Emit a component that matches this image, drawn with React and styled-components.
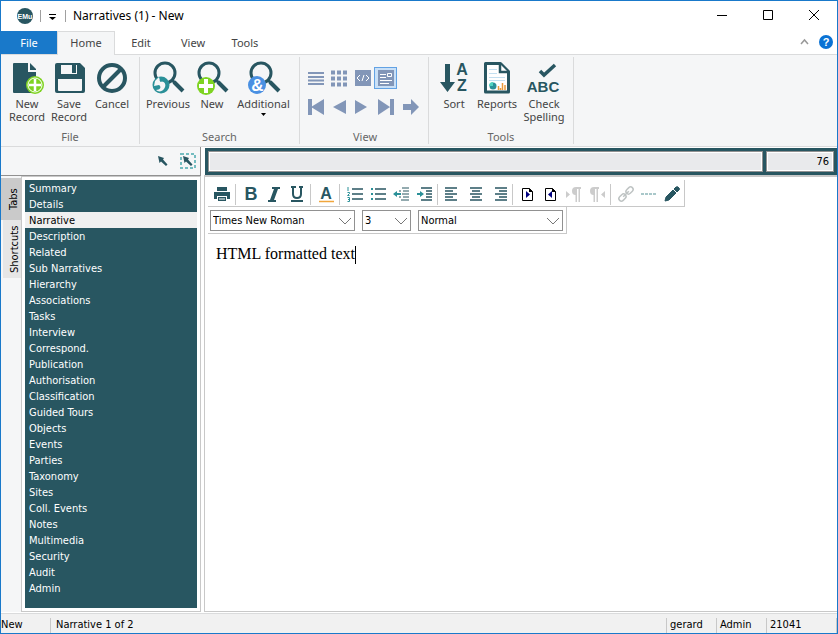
import React, { useState } from 'react';
import styled, { createGlobalStyle, ThemeProvider } from 'styled-components';

const theme = {
  colors: {
    teal: '#285661',
    cyan: '#2a9098',
    green: '#7ed321',
    blue: '#1979ca',
    slate: '#8296b8',
    ribbon: '#f5f6f7',
    line: '#dadbdc',
    border: '#c8c8c8',
    dark: '#919191',
    status: '#f1f1f1',
  },
  fonts: {
    ribbon: '"Noto Sans", "Open Sans", sans-serif',
    form: '"DejaVu Sans Condensed", "Noto Sans", sans-serif',
    editor: '"Liberation Serif", serif',
  },
};

// Style
const GlobalStyle = createGlobalStyle`
  * {
    box-sizing: border-box;
  }

  body {
    margin: 0;
  }

  button, select {
    margin: 0;
    padding: 0;
    border: 0;
    border-radius: 0;
    background: none;
    color: inherit;
    font: inherit;
  }

  svg {
    display: block;
    flex: none;
    overflow: visible;
  }
`;

const Window = styled.div`
  display: flex;
  flex-direction: column;
  min-height: 100vh;
  border: 1px solid ${(props) => props.theme.colors.blue};
  background: #fff;
  color: #000;
  font: 11px/16px ${(props) => props.theme.fonts.form};
`;

const TitleBar = styled.header`
  display: flex;
  align-items: center;
  height: 30px;
  padding-left: 16px;
  font: 12px/16px ${(props) => props.theme.fonts.ribbon};
`;

const TitleLine = styled.span`
  width: 1px;
  height: 12px;
  margin: 0 7px;
  background: #a0a0a0;
`;

const Title = styled.h1`
  flex: 1;
  margin: 0;
  font: inherit;
`;

const WindowButton = styled.button`
  display: grid;
  place-items: center;
  width: 46px;
  height: 30px;
`;

const RibbonTabs = styled.nav`
  display: flex;
  align-items: stretch;
  height: 24px;
  color: #444;
  font: 11px/16px ${(props) => props.theme.fonts.ribbon};
  border-bottom: 1px solid ${(props) => props.theme.colors.line};
`;

const FileTab = styled.button`
  width: 56px;
  background: ${(props) => props.theme.colors.blue};
  color: #fff;
`;

const RibbonTab = styled.button`
  width: ${(props) => (props.$active ? '58px' : '52px')};
  margin-bottom: -1px;
  padding-bottom: 1px;
  border: 1px solid
    ${(props) => (props.$active ? props.theme.colors.line : 'transparent')};
  border-bottom: 0;
  background: ${(props) =>
    props.$active ? props.theme.colors.ribbon : 'transparent'};
`;

const TabTools = styled.div`
  display: flex;
  align-items: center;
  gap: 10px;
  margin-left: auto;
  padding: 0 4px 2px 0;
`;

const Ribbon = styled.div`
  display: flex;
  height: 92px;
  padding: 2px 0;
  background: ${(props) => props.theme.colors.ribbon};
  border-bottom: 1px solid ${(props) => props.theme.colors.line};
  color: #444;
  font: 11px/13px ${(props) => props.theme.fonts.ribbon};
`;

const Group = styled.section`
  display: flex;
  flex-direction: column;
  justify-content: space-between;
  padding: ${(props) => (props.$tight ? '5px 3px 1px 5px' : '5px 5px 1px')};
  border-right: 1px solid ${(props) => props.theme.colors.line};
`;

const GroupTools = styled.div`
  display: flex;
`;

const GroupName = styled.h2`
  margin: 0;
  color: #666;
  font: inherit;
  text-align: center;
`;

const BigButton = styled.button`
  display: flex;
  flex-direction: column;
  align-items: center;
  gap: 3px;
  width: ${(props) => props.$width}px;
`;

const ViewRow = styled.div`
  display: flex;
  margin-top: ${(props) => (props.$second ? '7px' : '5px')};
`;

const ViewButton = styled.button`
  display: grid;
  place-items: center;
  width: ${(props) => (props.$wide ? '24px' : '23px')};
  height: 22px;
  border: 1px solid ${(props) => (props.$active ? '#62a2e4' : 'transparent')};
  background: ${(props) => (props.$active ? '#c9e0f7' : 'transparent')};
`;

const Body = styled.div`
  display: flex;
  flex: 1;
  gap: 3px;
  background: #fff;
`;

const Sidebar = styled.aside`
  display: flex;
  flex-direction: column;
  width: 200px;
  background: ${(props) => props.theme.colors.ribbon};
`;

const PickBar = styled.div`
  display: flex;
  justify-content: flex-end;
  align-items: center;
  gap: 7px;
  height: 29px;
  padding-right: 4px;
  border-right: 1px solid ${(props) => props.theme.colors.dark};
  border-bottom: 1px solid ${(props) => props.theme.colors.dark};
`;

const SideContent = styled.div`
  display: flex;
  flex: 1;
`;

const SideTabs = styled.div`
  display: flex;
  flex-direction: column;
  align-items: flex-end;
  width: 20px;
  padding-top: 2px;
`;

const SideTab = styled.button`
  width: ${(props) => (props.$active ? '20px' : '18px')};
  height: ${(props) => (props.$active ? '42px' : '58px')};
  padding-right: 5px;
  background: ${(props) => (props.$active ? '#cacaca' : '#e6e6e6')};
  line-height: 12px;
  writing-mode: vertical-rl;
  transform: rotate(180deg);
`;

const ListFrame = styled.div`
  display: flex;
  flex: 1;
  padding: 3px;
  background: #fff;
  border: 1px solid ${(props) => props.theme.colors.border};
`;

const TabList = styled.ul`
  flex: 1;
  margin: 0;
  padding: 0 0 11px;
  background: ${(props) => props.theme.colors.teal};
  list-style: none;
`;

const TabItem = styled.button`
  display: block;
  width: 100%;
  height: 16px;
  padding: 1px 0 0 4px;
  background: ${(props) => (props.$active ? '#f0f0f0' : 'transparent')};
  color: ${(props) => (props.$active ? '#000' : '#fff')};
  line-height: 15px;
  text-align: left;
`;

const Main = styled.main`
  display: flex;
  flex: 1;
  flex-direction: column;
  min-width: 0;
  border-bottom: 1px solid ${(props) => props.theme.colors.border};
`;

const RecordBar = styled.div`
  display: flex;
  gap: 3px;
  margin-top: 1px;
  margin-left: 1px;
  padding: 3px;
  background: ${(props) => props.theme.colors.teal};
`;

const RecordBox = styled.output`
  flex: ${(props) => (props.$wide ? '1' : '0 0 68px')};
  height: 21px;
  padding: 0 4px;
  border: 1px solid ${(props) => props.theme.colors.dark};
  box-shadow: inset 0 0 0 1px #fff;
  background: #e9eaec;
  line-height: 19px;
  text-align: right;
`;

const Editor = styled.div`
  display: flex;
  flex: 1;
  flex-direction: column;
  align-items: flex-start;
  padding: 3px;
  border-top: 2px solid ${(props) => props.theme.colors.border};
  border-left: 1px solid ${(props) => props.theme.colors.border};
`;

const Toolbar = styled.div`
  display: flex;
  align-items: center;
  height: 27px;
  padding: ${(props) => (props.$fields ? '1px 3px 0 2px' : '2px 1px 0 2px')};
  gap: ${(props) => (props.$fields ? '7px' : '0')};
  border-right: 1px solid ${(props) => props.theme.colors.border};
  border-bottom: 1px solid ${(props) => props.theme.colors.border};
`;

const Tool = styled.button`
  display: grid;
  place-items: center;
  width: 23px;
  height: 22px;
`;

const ToolLine = styled.span`
  width: 1px;
  height: 21px;
  margin: 0 3px 0 2px;
  background: ${(props) => props.theme.colors.border};
`;

const SelectBox = styled.label`
  display: grid;
  align-items: center;
  width: ${(props) => (props.$short ? '49px' : '145px')};
  height: 21px;
  border: 1px solid ${(props) => props.theme.colors.dark};

  > * {
    grid-area: 1 / 1;
  }

  svg {
    justify-self: end;
    margin-right: 3px;
    pointer-events: none;
  }
`;

const Select = styled.select`
  appearance: none;
  width: 100%;
  height: 19px;
  padding: 0 2px;
`;

const Document = styled.div`
  width: 100%;
  flex: 1;
  padding: 10px 8px;
  outline: 0;
  font: 16px/20px ${(props) => props.theme.fonts.editor};
`;

const Caret = styled.span`
  display: inline-block;
  width: 1px;
  height: 18px;
  background: #000;
  vertical-align: middle;
`;

const StatusBar = styled.footer`
  display: flex;
  height: 20px;
  margin-top: 1px;
  background: ${(props) => props.theme.colors.status};
  border-top: 1px solid ${(props) => props.theme.colors.line};
`;

const StatusCell = styled.span`
  flex: ${(props) => (props.$width ? `0 0 ${props.$width}px` : '1')};
  margin-top: 4px;
  padding-left: ${(props) => {
    if (props.$first) return '0';
    return props.$width ? '3px' : '5px';
  }};
  border-right: 1px solid ${(props) => props.theme.colors.border};
  line-height: 13px;
`;

// Icons
const { teal, cyan, green, slate } = theme.colors;

const IconText = styled.text`
  font-family: 'Liberation Sans', sans-serif;
  font-weight: 700;
  text-anchor: middle;
`;

const Big = ({ children }) => (
  <svg width="32" height="32" viewBox="0 0 32 32" aria-hidden="true">
    {children}
  </svg>
);

const Small = ({ children, width = 20, height = 20 }) => (
  <svg
    width={width}
    height={height}
    viewBox={`0 0 ${width} ${height}`}
    fill="none"
    aria-hidden="true"
  >
    {children}
  </svg>
);

const Lens = ({ children }) => (
  <Big>
    <circle cx="13" cy="11" r="10" fill="none" stroke={teal} strokeWidth="3" />
    <path d="M20 18l3 3" stroke={teal} strokeWidth="3" />
    <path d="M22 20l9 9" stroke={teal} strokeWidth="4" />
    {children}
  </Big>
);

const NewIcon = () => (
  <Big>
    <path d="M2 2q0-1 1-1h14v9h8v21H3q-1 0-1-1z" fill={teal} />
    <path d="M19 1l6 6v1h-6z" fill={teal} />
    <circle cx="24" cy="23" r="9" fill={green} />
    <circle cx="24" cy="23" r="7" fill="none" stroke="#fff" />
    <path d="M18 23h12M24 17v12" stroke="#fff" strokeWidth="2.500" />
  </Big>
);

const SaveIcon = () => (
  <Big>
    <path
      d="M4 1h23l5 5v23q0 2-2 2H4q-2 0-2-2V3q0-2 2-2z"
      fill={teal}
    />
    <path d="M8 3h16v9H8zM5 17h24v11q0 1-1 1H6q-1 0-1-1z" fill="#f5f6f7" />
    <path d="M19 3h4v8h-4z" fill={teal} />
  </Big>
);

const CancelIcon = () => (
  <Big>
    <g fill="none" stroke={teal} strokeWidth="4">
      <circle cx="16" cy="16" r="13" />
      <path d="M7 25L25 7" />
    </g>
  </Big>
);

const PreviousIcon = () => (
  <Lens>
    <circle cx="9" cy="23" r="8.500" fill={cyan} />
    <path
      d="M3 19l4-4 1 4c5 0 7 4 4 8-2 3-6 3-8 1 4 0 6-3 3-5l-5 1z"
      fill="#f5f6f7"
    />
    <path d="M8 19c4-2 7 0 7 4" fill="none" stroke={cyan} strokeWidth="2" />
  </Lens>
);

const SearchNewIcon = () => (
  <Lens>
    <circle cx="10" cy="24" r="9" fill={green} />
    <path d="M3 24h14M10 17v14" stroke="#fff" strokeWidth="4" />
  </Lens>
);

const AdditionalIcon = () => (
  <Lens>
    <circle cx="9" cy="23" r="9" fill="#4a90e2" />
    <IconText x="9.500" y="29" fontSize="17" fill="#fff">
      &amp;
    </IconText>
  </Lens>
);

const SortIcon = () => (
  <Big>
    <path d="M7 2h5v18h5L9.500 30 2 20h5z" fill={teal} />
    <IconText x="24" y="13" fontSize="16" fill={teal}>
      A
    </IconText>
    <IconText x="24" y="29" fontSize="16" fill={teal}>
      Z
    </IconText>
  </Big>
);

const ReportsIcon = () => (
  <Big>
    <path
      d="M4.500 1.500h15l8 8V30h-23z"
      fill="#fff"
      stroke={teal}
      strokeWidth="3"
      strokeLinejoin="round"
    />
    <path d="M19 2v8h8" fill="#fff" stroke={teal} strokeWidth="2.500" />
    <path d="M8 7.500h8M8 11.500h8M8 15.500h16M8 18.500h16" stroke="#c3dff0" />
    <circle cx="12" cy="24" r="3.500" fill={cyan} />
    <path d="M12 24v-4a4 4 0 0 0-4 4z" fill="#50d2c0" />
    <path
      d="M17.500 28v-4M19.500 28v-2M21.500 28v-7M24 28v-5"
      stroke="#e89a3c"
      strokeWidth="1.500"
    />
  </Big>
);

const SpellingIcon = () => (
  <Big>
    <path d="M12 9l4 4L27 3" fill="none" stroke={teal} strokeWidth="3.500" />
    <IconText x="15" y="30" fontSize="15" fill={teal}>
      ABC
    </IconText>
  </Big>
);

const viewIcons = [
  <path d="M1 5h16M1 9h16M1 12.500h16M1 16h16" stroke={slate} strokeWidth="2" />,
  <path
    d="M1 4.500h16M1 10.500h16M1 16.500h16"
    stroke={slate}
    strokeWidth="4"
    strokeDasharray="4 2"
  />,
  <>
    <path d="M2 2h16v16H2z" fill={slate} />
    <path d="M7 7l-3 3 3 3M13 7l3 3-3 3M11 7l-2 6" stroke="#fff" />
  </>,
  <>
    <path d="M2 2h16v16H2z" fill={slate} />
    <path
      d="M4 6.500h6M4 9.500h6M4 12.500h12M4 15.500h9M11.500 5.500h4v3h-4z"
      stroke="#fff"
    />
  </>,
];

const moveIcons = [
  ['First', 'M1 2h4v16H1zM17 2v16L4 10z'],
  ['Back', 'M15 3v14L2 10z'],
  ['Forward', 'M0 3v14l12-7z'],
  ['Last', 'M-1 2v16l12-8zM11 2h4v16h-4z'],
  ['Go', 'M0 7h8V2l8 8-8 8v-5H0z'],
];

const align = (x, short) => (
  <path
    d={`M${x} 4h12M${x + short} 7h8M${x} 10h12M${x + short} 13h8M${x} 16h12`}
    stroke={teal}
    strokeWidth="1.500"
  />
);

const Letter = ({ children, ...rest }) => (
  <IconText x="10" y="16" fontSize="18" fill={teal} {...rest}>
    {children}
  </IconText>
);

const tools = [
  [
    [
      'Print',
      <>
        <path
          d="M5 3h10v4H5zM2 8h16v7h-3v-3H5v3H2zM6 13h8v4H6z"
          fill={teal}
        />
        <path d="M7 15h6" stroke="#fff" />
      </>,
    ],
  ],
  [
    ['Bold', <Letter>B</Letter>],
    [
      'Italic',
      <path
        d="M8 3h8v2h-2l-4 11h2v2H4v-2h2l4-11H8z"
        fill={teal}
      />,
    ],
    [
      'Underline',
      <>
        <path
          d="M6 3v7q0 4 4 4t4-4V3M4 3h5M12 3h4"
          stroke={teal}
          strokeWidth="2"
        />
        <path d="M4 17h12" stroke={teal} strokeWidth="2" />
      </>,
    ],
  ],
  [
    [
      'Text colour',
      <>
        <Letter y="15" fontSize="16">
          A
        </Letter>
        <path d="M3 17.500h15" stroke="#f0a63c" strokeWidth="1.500" />
      </>,
    ],
  ],
  [
    [
      'Numbered list',
      <>
        <path d="M7 5h11M7 10h11M7 15h11" stroke={teal} strokeWidth="1.500" />
        <path
          d="M3 3v4M2.500 8.500h2v1l-2 2h2M2.500 13.500h2v4h-2M3 15.500h1"
          stroke={cyan}
        />
      </>,
    ],
    [
      'Bulleted list',
      <>
        <path d="M7 5h11M7 10h11M7 15h11" stroke={teal} strokeWidth="1.500" />
        <path d="M3 5h2M3 10h2M3 15h2" stroke={cyan} strokeWidth="2" />
      </>,
    ],
    [
      'Outdent',
      <>
        <path
          d="M11 4h7M8 7h2m2 0h6M11 10h7M8 13h2m2 0h6M10 16h8"
          stroke={teal}
        />
        <path d="M2 10l4-3v2h4v2H6v2z" fill={cyan} />
      </>,
    ],
    [
      'Indent',
      <>
        <path
          d="M7 4h11M12 7h6M12 10h6M12 13h6M7 16h11"
          stroke={teal}
          strokeWidth="1.500"
        />
        <path d="M10 10L6 7v2H3v2h3v2z" fill={cyan} />
      </>,
    ],
  ],
  [
    ['Align left', align(2, 0)],
    ['Align centre', align(4, 2)],
    ['Align right', align(6, 4)],
  ],
  [
    [
      'Insert before',
      <>
        <path d="M4.500 4.500h7l3 3v9h-10z" stroke="#000" />
        <path d="M11 4v4h4z" fill="#000" />
        <path d="M8 7v7l4-3.500z" fill="#000080" />
      </>,
    ],
    [
      'Insert after',
      <>
        <path d="M4.500 4.500h7l3 3v9h-10z" stroke="#000" />
        <path d="M11 4v4h4z" fill="#000" />
        <path d="M11 7v7l-4-3.500z" fill="#000080" />
      </>,
    ],
    [
      'Left to right',
      <path
        d="M2 7v7l4-3.500zM17 3v2h-1v13h-1.500V5H13v13h-1.500v-7Q8 11 8 7t4-4z"
        fill="#ccc"
      />,
    ],
    [
      'Right to left',
      <path
        d="M18 7v7l-4-3.500zM12 3v2h-1v13H9.500V5H8v13H6.500v-7Q3 11 3 7t4-4z"
        fill="#ccc"
      />,
    ],
  ],
  [
    [
      'Link',
      <g stroke="#bfc4c4" strokeWidth="1.500" transform="rotate(-45 10 10)">
        <rect x="1" y="7.500" width="8" height="5" rx="2.500" />
        <rect x="11" y="7.500" width="8" height="5" rx="2.500" />
        <path d="M6 10h8" />
      </g>,
    ],
    [
      'Rule',
      <path
        d="M2 10h16"
        stroke="#a9c8ca"
        strokeWidth="2"
        strokeDasharray="3 1"
      />,
    ],
    [
      'Edit source',
      <path
        d="M3 17l1-4 7-7 3 3-7 7zM12 5l2-2q2-1 3 1 1 1 0 2l-2 2z"
        fill={teal}
        stroke={teal}
      />,
    ],
  ],
];

const pages = [
  'Summary', 'Details', 'Narrative', 'Description', 'Related',
  'Sub Narratives', 'Hierarchy', 'Associations', 'Tasks', 'Interview',
  'Correspond.', 'Publication', 'Authorisation', 'Classification',
  'Guided Tours', 'Objects', 'Events', 'Parties', 'Taxonomy', 'Sites',
  'Coll. Events', 'Notes', 'Multimedia', 'Security', 'Audit', 'Admin',
];

const viewNames = ['List', 'Contact sheet', 'Page', 'Details'];

const Cursor = () => (
  <path d="M5 5l6 2-1 1.500 4.500 5-1.500 1.500-5-4.500L6.500 12z" fill={teal} />
);

const Field = ({ label, value, short }) => (
  <SelectBox $short={short}>
    <Select aria-label={label} defaultValue={value}>
      <option>{value}</option>
    </Select>
    <Small width={12} height={8}>
      <path d="M0 1l6 6 6-6" stroke="#777" />
    </Small>
  </SelectBox>
);

const App = () => {
  const [page, setPage] = useState('Narrative');

  return (
    <ThemeProvider theme={theme}>
      <GlobalStyle />
      <Window>
        <TitleBar>
          <Small width={16} height={16}>
            <circle cx="8" cy="8" r="8" fill={teal} />
            <IconText x="8" y="11" fontSize="7" fill="#fff">
              EMu
            </IconText>
          </Small>
          <TitleLine />
          <Small width={10} height={10}>
            <path d="M1 3.500h7" stroke="#000" />
            <path d="M1 6h7L4.500 9z" fill="#000" />
          </Small>
          <TitleLine />
          <Title>Narratives (1) - New</Title>
          <WindowButton aria-label="Minimise">
            <Small width={12} height={12}>
              <path d="M1 5.500h10" stroke="#000" />
            </Small>
          </WindowButton>
          <WindowButton aria-label="Maximise">
            <Small width={12} height={12}>
              <path d="M1.500 .500h9v9h-9z" stroke="#000" />
            </Small>
          </WindowButton>
          <WindowButton aria-label="Close">
            <Small width={12} height={12}>
              <path d="M1 0l10 10M11 0L1 10" stroke="#000" />
            </Small>
          </WindowButton>
        </TitleBar>

        <RibbonTabs>
          <FileTab>File</FileTab>
          <RibbonTab $active>Home</RibbonTab>
          <RibbonTab>Edit</RibbonTab>
          <RibbonTab>View</RibbonTab>
          <RibbonTab>Tools</RibbonTab>
          <TabTools>
            <button aria-label="Collapse ribbon">
              <Small width={9} height={6}>
                <path d="M1 5l3.500-4L8 5" stroke="#999" strokeWidth="1.500" />
              </Small>
            </button>
            <button aria-label="Help">
              <Small width={14} height={14}>
                <circle cx="7" cy="7" r="7" fill="#0a72d4" />
                <IconText x="7" y="11" fontSize="11" fill="#fff">
                  ?
                </IconText>
              </Small>
            </button>
          </TabTools>
        </RibbonTabs>

        <Ribbon>
          <Group>
            <GroupTools>
              <BigButton $width={42}><NewIcon />New Record</BigButton>
              <BigButton $width={42}><SaveIcon />Save Record</BigButton>
              <BigButton $width={44}><CancelIcon />Cancel</BigButton>
            </GroupTools>
            <GroupName>File</GroupName>
          </Group>
          <Group>
            <GroupTools>
              <BigButton $width={46}><PreviousIcon />Previous</BigButton>
              <BigButton $width={42}><SearchNewIcon />New</BigButton>
              <BigButton $width={61}>
                <AdditionalIcon />
                Additional
                <Small width={5} height={3}>
                  <path d="M0 0h5L2.500 3z" fill="#000" />
                </Small>
              </BigButton>
            </GroupTools>
            <GroupName>Search</GroupName>
          </Group>
          <Group $tight>
            <div>
              <ViewRow>
                {viewIcons.map((icon, i) => (
                  <ViewButton
                    key={viewNames[i]}
                    aria-label={viewNames[i]}
                    $active={i === 3}
                  >
                    <Small>{icon}</Small>
                  </ViewButton>
                ))}
              </ViewRow>
              <ViewRow $second>
                {moveIcons.map(([name, d]) => (
                  <ViewButton key={name} aria-label={name} $wide>
                    <Small>
                      <path d={d} fill={slate} />
                    </Small>
                  </ViewButton>
                ))}
              </ViewRow>
            </div>
            <GroupName>View</GroupName>
          </Group>
          <Group>
            <GroupTools>
              <BigButton $width={40}><SortIcon />Sort</BigButton>
              <BigButton $width={46}><ReportsIcon />Reports</BigButton>
              <BigButton $width={48}><SpellingIcon />Check Spelling</BigButton>
            </GroupTools>
            <GroupName>Tools</GroupName>
          </Group>
        </Ribbon>

        <Body>
          <Sidebar>
            <PickBar>
              <button aria-label="Select">
                <Small>
                  <Cursor />
                </Small>
              </button>
              <button aria-label="Select area">
                <Small width={16} height={16}>
                  <rect
                    x="1"
                    y="1"
                    width="14"
                    height="14"
                    stroke="#74bcc0"
                    strokeWidth="2"
                    strokeDasharray="3 2"
                  />
                  <g transform="translate(-2 -2)">
                    <Cursor />
                  </g>
                </Small>
              </button>
            </PickBar>
            <SideContent>
              <SideTabs>
                <SideTab $active>Tabs</SideTab>
                <SideTab>Shortcuts</SideTab>
              </SideTabs>
              <ListFrame>
                <TabList>
                  {pages.map((name) => (
                    <li key={name}>
                      <TabItem
                        $active={name === page}
                        onClick={() => setPage(name)}
                      >
                        {name}
                      </TabItem>
                    </li>
                  ))}
                </TabList>
              </ListFrame>
            </SideContent>
          </Sidebar>

          <Main>
            <RecordBar>
              <RecordBox $wide />
              <RecordBox>76</RecordBox>
            </RecordBar>
            <Editor>
              <Toolbar>
                {tools.map((group, i) => (
                  <React.Fragment key={group[0][0]}>
                    {i > 0 && <ToolLine />}
                    {group.map(([name, icon]) => (
                      <Tool key={name} aria-label={name}>
                        <Small>{icon}</Small>
                      </Tool>
                    ))}
                  </React.Fragment>
                ))}
              </Toolbar>
              <Toolbar $fields>
                <Field label="Font" value="Times New Roman" />
                <Field label="Size" value="3" short />
                <Field label="Style" value="Normal" />
              </Toolbar>
              <Document
                role="textbox"
                aria-label="Narrative"
                contentEditable
                suppressContentEditableWarning
              >
                HTML formatted text
                <Caret />
              </Document>
            </Editor>
          </Main>
        </Body>

        <StatusBar>
          <StatusCell $width={50} $first>New</StatusCell>
          <StatusCell>Narrative 1 of 2</StatusCell>
          <StatusCell $width={50}>gerard</StatusCell>
          <StatusCell $width={50}>Admin</StatusCell>
          <StatusCell $width={70}>21041</StatusCell>
        </StatusBar>
      </Window>
    </ThemeProvider>
  );
};

export default App;
